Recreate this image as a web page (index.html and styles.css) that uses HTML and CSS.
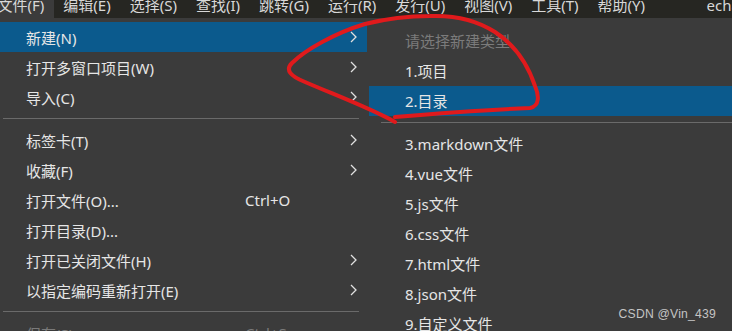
FILE: index.html
```
<!DOCTYPE html>
<html lang="zh-CN">
<head>
<meta charset="utf-8">
<title>文件菜单</title>
<link rel="stylesheet" href="styles.css">
</head>
<body>
<div class="menubar">
  <div class="bar-items">
    <span class="bar-item active">文件(F)</span>
    <span class="bar-item">编辑(E)</span>
    <span class="bar-item">选择(S)</span>
    <span class="bar-item">查找(I)</span>
    <span class="bar-item">跳转(G)</span>
    <span class="bar-item">运行(R)</span>
    <span class="bar-item">发行(U)</span>
    <span class="bar-item">视图(V)</span>
    <span class="bar-item">工具(T)</span>
    <span class="bar-item">帮助(Y)</span>
    <span class="bar-title">echarts</span>
  </div>
</div>
<div class="menus">
  <div class="menu">
    <div class="item hl"><span class="label">新建(N)</span><span class="shortcut"></span><svg class="chev" viewBox="0 0 7 12"><polyline points="1,1 6,6 1,11"/></svg></div>
    <div class="item"><span class="label">打开多窗口项目(W)</span><span class="shortcut"></span><svg class="chev" viewBox="0 0 7 12"><polyline points="1,1 6,6 1,11"/></svg></div>
    <div class="item"><span class="label">导入(C)</span><span class="shortcut"></span><svg class="chev" viewBox="0 0 7 12"><polyline points="1,1 6,6 1,11"/></svg></div>
    <div class="sep"></div>
    <div class="item"><span class="label">标签卡(T)</span><span class="shortcut"></span><svg class="chev" viewBox="0 0 7 12"><polyline points="1,1 6,6 1,11"/></svg></div>
    <div class="item"><span class="label">收藏(F)</span><span class="shortcut"></span><svg class="chev" viewBox="0 0 7 12"><polyline points="1,1 6,6 1,11"/></svg></div>
    <div class="item"><span class="label">打开文件(O)...</span><span class="shortcut">Ctrl+O</span><span class="nochev"></span></div>
    <div class="item"><span class="label">打开目录(D)...</span><span class="shortcut"></span><span class="nochev"></span></div>
    <div class="item"><span class="label">打开已关闭文件(H)</span><span class="shortcut"></span><svg class="chev" viewBox="0 0 7 12"><polyline points="1,1 6,6 1,11"/></svg></div>
    <div class="item"><span class="label">以指定编码重新打开(E)</span><span class="shortcut"></span><svg class="chev" viewBox="0 0 7 12"><polyline points="1,1 6,6 1,11"/></svg></div>
    <div class="sep"></div>
    <div class="item disabled"><span class="label">保存(S)</span><span class="shortcut">Ctrl+S</span><span class="nochev"></span></div>
  </div>
  <div class="submenu">
    <div class="sub-item hint">请选择新建类型</div>
    <div class="sub-item">1.项目</div>
    <div class="sub-item hl">2.目录</div>
    <div class="sub-sep"></div>
    <div class="sub-item">3.markdown文件</div>
    <div class="sub-item">4.vue文件</div>
    <div class="sub-item">5.js文件</div>
    <div class="sub-item">6.css文件</div>
    <div class="sub-item">7.html文件</div>
    <div class="sub-item">8.json文件</div>
    <div class="sub-item">9.自定义文件</div>
  </div>
</div>
<svg class="scribble" viewBox="0 0 732 331" width="732" height="331">
  <path d="M 395 117 C 430 114 480 110 530 108 C 540 106 539 95 535 86 C 528 65 515 45 495 32 C 478 21 455 15 430 16 C 405 16 385 19 365 24 C 335 33 305 50 292 63 C 285 70 290 76 305 82 C 335 95 370 108 395 122"/>
</svg>
<div class="watermark">CSDN @Vin_439</div>
</body>
</html>
```
FILE: styles.css
```
* { box-sizing: border-box; }
html, body {
  margin: 0;
  padding: 0;
  width: 732px;
  height: 331px;
  overflow: hidden;
  background: #3b3b3b;
  font-family: "Noto Sans", "Noto Sans CJK SC", sans-serif;
  color: #e6e6e6;
  position: relative;
}
.menubar {
  height: 18px;
  background: #262622;
  overflow: hidden;
}
.bar-items {
  display: flex;
  margin-top: -8px;
  margin-left: -12px;
  height: 26px;
  white-space: nowrap;
}
.bar-item {
  font-size: 15px;
  line-height: 26px;
  padding: 0 9.5px;
  color: #d8d8d8;
}
.bar-item.active {
  background: #3b3b3b;
}
.bar-title {
  font-size: 15px;
  line-height: 26px;
  color: #d8d8d8;
  margin-left: 52px;
}
.menus {
  display: flex;
  height: 313px;
  overflow: hidden;
}
.menu {
  width: 367px;
  padding-top: 4px;
  flex: none;
}
.item {
  display: flex;
  align-items: center;
  height: 30px;
  padding-left: 26px;
  font-size: 15px;
  white-space: nowrap;
}
.item.hl { background: #0b5a8d; }
.item.disabled { color: #7a7a7a; }
.label { width: 219px; flex: none; }
.shortcut { flex: 1; }
.chev {
  width: 7px;
  height: 12px;
  margin-right: 10px;
  fill: none;
  stroke: #e0e0e0;
  stroke-width: 1.3;
}
.nochev { width: 7px; margin-right: 10px; }
.sep {
  height: 13px;
  margin: 0 8px 0 3px;
  background: linear-gradient(#6a6a6a, #6a6a6a) no-repeat 0 6px / 100% 1px;
}
.submenu {
  flex: 1;
  margin-left: 2px;
  padding-top: 8px;
}
.sub-item {
  height: 30px;
  line-height: 30px;
  padding-left: 36px;
  font-size: 15px;
  white-space: nowrap;
}
.sub-item.hint { color: #7b7b7b; }
.sub-item.hl { background: #0b5a8d; }
.sub-sep {
  height: 13px;
  margin-left: 12px;
  background: linear-gradient(#6a6a6a, #6a6a6a) no-repeat 0 6px / 100% 1px;
}
.scribble {
  position: absolute;
  left: 0;
  top: 0;
  pointer-events: none;
}
.scribble path {
  fill: none;
  stroke: #e01a1c;
  stroke-width: 4;
  stroke-linecap: round;
  stroke-linejoin: round;
}
.watermark {
  position: absolute;
  right: 16px;
  top: 307px;
  font-family: "Liberation Sans", "Noto Sans", sans-serif;
  font-size: 12.2px;
  color: #c4c4c4;
  letter-spacing: 0.2px;
}
```
